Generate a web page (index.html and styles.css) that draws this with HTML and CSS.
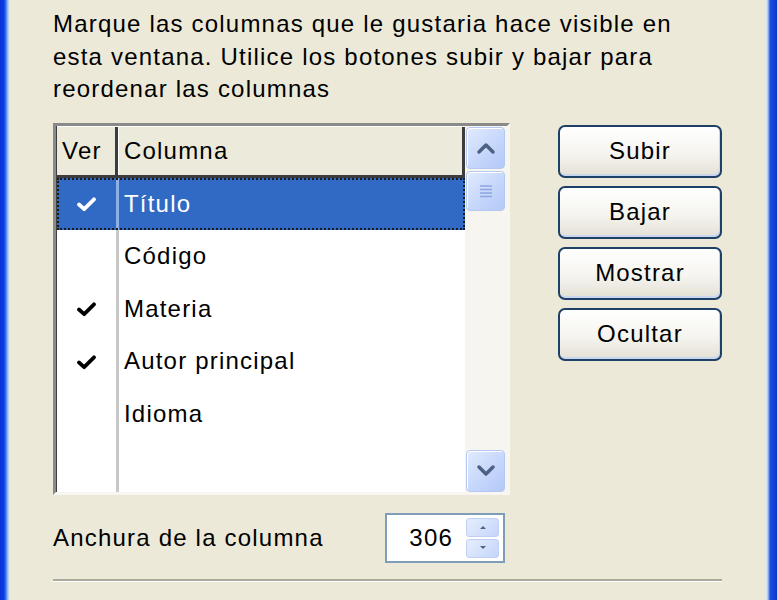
FILE: index.html
```html
<!DOCTYPE html>
<html lang="es">
<head>
    <meta charset="UTF-8">
    <title>Columnas visibles</title>
    <link rel="stylesheet" href="styles.css">
</head>
<body>
<div class="window">
    <div class="frame-left"></div>
    <div class="client">
        <p class="intro">Marque las columnas que le gustaria hace visible en<br>esta ventana. Utilice los botones subir y bajar para<br>reordenar las columnas</p>

        <div class="middle">
            <div class="listbox">
                <div class="list">
                    <div class="list-head">
                        <div class="col-ver">Ver</div>
                        <div class="col-name">Columna</div>
                    </div>
                    <div class="row selected">
                        <div class="col-ver"><svg class="check" viewBox="0 0 20 16"><path d="M2 8 L7.5 13 L18 2.5"/></svg></div>
                        <div class="col-name">Título</div>
                    </div>
                    <div class="row">
                        <div class="col-ver"></div>
                        <div class="col-name">Código</div>
                    </div>
                    <div class="row">
                        <div class="col-ver"><svg class="check" viewBox="0 0 20 16"><path d="M2 8 L7.5 13 L18 2.5"/></svg></div>
                        <div class="col-name">Materia</div>
                    </div>
                    <div class="row">
                        <div class="col-ver"><svg class="check" viewBox="0 0 20 16"><path d="M2 8 L7.5 13 L18 2.5"/></svg></div>
                        <div class="col-name">Autor principal</div>
                    </div>
                    <div class="row">
                        <div class="col-ver"></div>
                        <div class="col-name">Idioma</div>
                    </div>
                    <div class="row filler">
                        <div class="col-ver"></div>
                        <div class="col-name"></div>
                    </div>
                </div>
                <div class="scrollbar">
                    <div class="sb-btn">
                        <svg viewBox="0 0 20 14"><path d="M3 11 L10 4 L17 11"/></svg>
                    </div>
                    <div class="sb-thumb">
                        <svg viewBox="0 0 16 16"><path d="M2 3 H14 M2 6.5 H14 M2 10 H14 M2 13.5 H14"/></svg>
                    </div>
                    <div class="sb-track"></div>
                    <div class="sb-btn">
                        <svg viewBox="0 0 20 14"><path d="M3 3 L10 10 L17 3"/></svg>
                    </div>
                </div>
            </div>

            <div class="buttons">
                <button class="btn">Subir</button>
                <button class="btn">Bajar</button>
                <button class="btn">Mostrar</button>
                <button class="btn">Ocultar</button>
            </div>
        </div>

        <div class="width-row">
            <span class="width-label">Anchura de la columna</span>
            <div class="spin">
                <span class="spin-value">306</span>
                <div class="spin-buttons">
                    <div class="spin-btn"><svg viewBox="0 0 10 6"><path d="M2 5 L5 2 L8 5 Z"/></svg></div>
                    <div class="spin-btn"><svg viewBox="0 0 10 6"><path d="M2 1 L5 4 L8 1 Z"/></svg></div>
                </div>
            </div>
        </div>

        <div class="separator"></div>
    </div>
    <div class="frame-right"></div>
</div>
</body>
</html>
```

FILE: styles.css
```css
/* General */
body {
    margin: 0;
    background-color: #ece9d8;
    font-family: "Liberation Sans", Arial, sans-serif;
    font-size: 24px;
    letter-spacing: 1.2px;
    color: #000;
}

/* Window frame */
.window {
    display: flex;
    height: 600px;
}

.frame-left {
    width: 10px;
    background: linear-gradient(to right, #0831d9 0, #0a3ee0 4px, #3d7bf0 6px, #a9c8f2 8px, #e4ecf6 10px);
}

.frame-right {
    width: 11px;
    background: linear-gradient(to right, #e4ecf6 0, #a9c3ee 2px, #1a4fe2 4px, #0a35cc 11px);
}

.client {
    flex: 1;
    padding: 8px 44px 0 43px;
}

.intro {
    margin: 0;
    line-height: 32.5px;
}

/* List + buttons */
.middle {
    display: flex;
    gap: 48px;
    margin-top: 17px;
    align-items: flex-start;
}

.listbox {
    display: flex;
    width: 457px;
    height: 372px;
    box-sizing: border-box;
    border: 3px solid;
    border-color: #8a8a8a #f7f6f1 #f7f6f1 #8a8a8a;
    box-shadow: inset 1px 1px 0 #404040;
    background-color: #fff;
}

.list {
    flex: 1;
    display: flex;
    flex-direction: column;
    padding-left: 1px;
}

.list-head {
    display: flex;
    height: 52px;
    box-sizing: border-box;
    background-color: #ebeadb;
    border-bottom: 3px solid #3c3c3c;
    border-top: 1px solid #fff;
    align-items: center;
}

.list-head .col-ver {
    width: 53px;
    height: 100%;
    display: flex;
    align-items: center;
    padding-left: 5px;
    border-right: 3px solid #3c3c3c;
    box-shadow: 1px 0 0 #fff;
}

.list-head .col-name {
    height: 100%;
    display: flex;
    align-items: center;
    padding-left: 6px;
    border-right: 3px solid #3c3c3c;
}

.col-ver {
    width: 59px;
    flex-shrink: 0;
}

.col-name {
    flex: 1;
    padding-left: 5px;
}

.row {
    display: flex;
    height: 52.5px;
    align-items: center;
}

.row .col-ver {
    height: 100%;
    display: flex;
    align-items: center;
    justify-content: center;
    border-right: 3px solid #c8c8c8;
}

.row.filler {
    flex: 1;
}

.row.selected {
    background-color: #316ac5;
    color: #fff;
    outline: 2px dotted #1b1b1b;
    outline-offset: -2px;
}

.row.selected .col-ver {
    border-right-color: #8fb0e6;
}

.check {
    width: 19px;
    height: 15px;
    margin-top: 2px;
    fill: none;
    stroke: #000;
    stroke-width: 4;
    stroke-linecap: round;
    stroke-linejoin: round;
}

.selected .check {
    stroke: #fff;
}

/* Scrollbar */
.scrollbar {
    width: 42px;
    display: flex;
    flex-direction: column;
    background-color: #f6f5ef;
    padding: 1px 2px 0 1px;
    box-sizing: border-box;
}

.sb-btn,
.sb-thumb {
    display: flex;
    align-items: center;
    justify-content: center;
    border: 1px solid #b5c8f3;
    border-radius: 4px;
    background: linear-gradient(135deg, #e2ebfe 0%, #c4d5fb 60%, #b4c9f7 100%);
    box-shadow: inset 1px 1px 0 #fff;
}

.sb-btn {
    height: 40px;
}

.sb-btn svg {
    width: 20px;
    height: 14px;
    fill: none;
    stroke: #4d6185;
    stroke-width: 3.5;
    stroke-linecap: round;
    stroke-linejoin: round;
}

.sb-thumb {
    height: 38px;
    margin-top: 2px;
}

.sb-thumb svg {
    width: 16px;
    height: 16px;
    fill: none;
    stroke: #8ca6e0;
    stroke-width: 1.5;
}

.sb-track {
    flex: 1;
}

.buttons {
    display: flex;
    flex-direction: column;
    gap: 8px;
    margin-top: 2px;
}

.btn {
    width: 164px;
    height: 53px;
    border: 2px solid #1e3f66;
    border-radius: 7px;
    background: linear-gradient(#ffffff 0%, #f5f4ef 55%, #e3e0d5 100%);
    box-shadow: inset -1px -2px 0 #c9d6ee;
    font-family: inherit;
    font-size: 24px;
    letter-spacing: inherit;
    color: #000;
    padding: 0;
}

/* Column width row */
.width-row {
    display: flex;
    align-items: center;
    margin-top: 18px;
}

.width-label {
    width: 332px;
}

.spin {
    display: flex;
    align-items: center;
    justify-content: flex-end;
    width: 120px;
    height: 50px;
    box-sizing: border-box;
    border: 2px solid #7f9db9;
    background-color: #fff;
    padding-right: 4px;
}

.spin-value {
    margin-right: 13px;
}

.spin-buttons {
    display: flex;
    flex-direction: column;
    gap: 2px;
}

.spin-btn {
    width: 33px;
    height: 19px;
    display: flex;
    align-items: center;
    justify-content: center;
    border: 1px solid #c0d0f4;
    border-radius: 3px;
    background: linear-gradient(135deg, #e6eefd, #c5d5fa);
    box-sizing: border-box;
}

.spin-btn svg {
    width: 10px;
    height: 6px;
    fill: #4d6185;
}

.separator {
    margin-top: 16px;
    height: 2px;
    background-color: #aca899;
    border-bottom: 1px solid #fff;
}
```
